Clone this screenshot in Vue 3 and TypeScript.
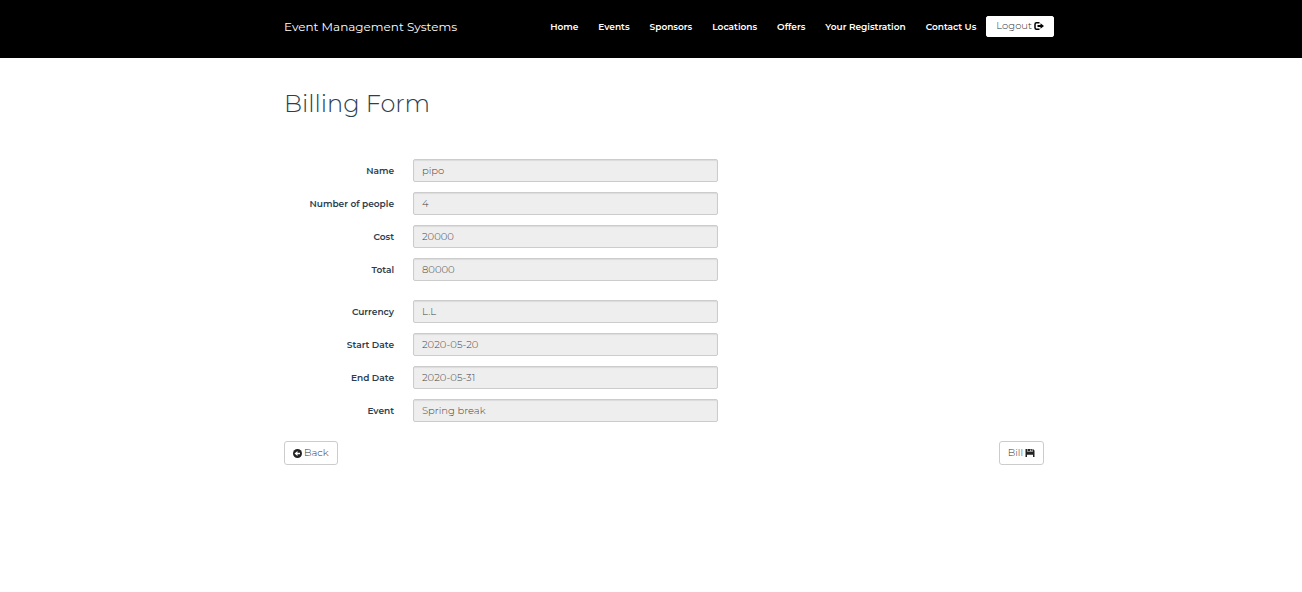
<script setup lang="ts">
interface Field {
  id: string
  label: string
  value: string
}

const links: string[] = ['Home', 'Events', 'Sponsors', 'Locations', 'Offers', 'Your Registration', 'Contact Us']

const groups: Field[][] = [
  [
    { id: 'name', label: 'Name', value: 'pipo' },
    { id: 'people', label: 'Number of people', value: '4' },
    { id: 'cost', label: 'Cost', value: '20000' },
    { id: 'total', label: 'Total', value: '80000' },
  ],
  [
    { id: 'currency', label: 'Currency', value: 'L.L' },
    { id: 'start', label: 'Start Date', value: '2020-05-20' },
    { id: 'end', label: 'End Date', value: '2020-05-31' },
    { id: 'event', label: 'Event', value: 'Spring break' },
  ],
]
</script>

<template>
  <div class="page">
    <header class="topbar">
      <div class="container bar">
        <a class="brand" href="#">Event Management Systems</a>
        <nav class="nav">
          <a v-for="link in links" :key="link" class="nav-link" href="#">{{ link }}</a>
          <button type="button" class="btn logout">
            <span>Logout</span>
            <svg class="icon" viewBox="0 0 20 16" aria-hidden="true">
              <path d="M11 1.500H5Q2 1.500 2 4.500v7q0 3 3 3h6" fill="none" stroke="currentColor" stroke-width="3" />
              <path d="M7 6h6V2.500L20 8l-7 5.500V10H7z" fill="currentColor" />
            </svg>
          </button>
        </nav>
      </div>
    </header>

    <main class="container">
      <h1 class="title">Billing Form</h1>
      <form class="form" @submit.prevent>
        <div v-for="(group, index) in groups" :key="index" class="group">
          <div v-for="field in group" :key="field.id" class="row">
            <label class="label" :for="field.id">{{ field.label }}</label>
            <input :id="field.id" class="input" type="text" :value="field.value" disabled />
          </div>
        </div>
        <div class="actions">
          <button type="button" class="btn">
            <svg class="icon back" viewBox="0 0 18 18" aria-hidden="true">
              <circle cx="9" cy="9" r="9" fill="currentColor" />
              <path d="M3 9l6-5v3.300h5v3.400H9V14z" fill="#fff" />
            </svg>
            <span>Back</span>
          </button>
          <button type="submit" class="btn bill">
            <span>Bill</span>
            <svg class="icon" viewBox="0 0 18 16" aria-hidden="true">
              <path d="M0 0h4v6h10V0h1l3 3v13h-3v-5H3v5H0z" fill="currentColor" />
              <path d="M3 6h12v5H3z" fill="currentColor" />
              <path d="M5 0h8v5H5z" fill="currentColor" />
              <path d="M9.500 1h2v3h-2z" fill="#fff" />
            </svg>
          </button>
        </div>
      </form>
    </main>
  </div>
</template>

<style>
body {
  margin: 0;
  background: #fff;
}
</style>

<style scoped>
.page {
  font-family: Montserrat, Inter, "Open Sans", sans-serif;
  font-size: 10px;
  line-height: 14px;
  color: #2c3e50;
}

.container {
  box-sizing: border-box;
  max-width: 770px;
  margin-left: max(16px, calc(50% - 367px));
}

.topbar {
  background: #000;
  padding: 15px 0 21px;
}

.bar {
  display: flex;
  align-items: center;
  justify-content: space-between;
  min-height: 22px;
}

.brand {
  padding-top: 2px;
  color: #fff;
  font-size: 12px;
  font-weight: 400;
  text-decoration: none;
  white-space: nowrap;
}

.nav {
  display: flex;
  align-items: center;
}

.nav-link {
  padding: 2px 10px 0;
  color: #fff;
  font-size: 9px;
  font-weight: 600;
  text-decoration: none;
  white-space: nowrap;
}

.btn {
  display: inline-flex;
  align-items: center;
  gap: 2px;
  height: 24px;
  padding: 0 8px;
  border: 1px solid #ccc;
  border-radius: 3px;
  background: #fff;
  color: #333;
  font: inherit;
  font-weight: 300;
  cursor: pointer;
}

.logout {
  height: 21px;
  padding: 0 9px;
  border-color: #fff;
  border-radius: 2px;
}

.icon {
  width: 10px;
  height: 8px;
  color: #000;
}

.back {
  width: 9px;
  height: 9px;
  color: #222;
}

.bill .icon {
  color: #222;
}

.title {
  margin: 0;
  padding-top: 30px;
  font-size: 24px;
  line-height: 32px;
  font-weight: 300;
}

.form {
  padding: 39px 10px 0 0;
}

.group {
  display: grid;
  gap: 10px;
  margin-bottom: 19px;
}

.row {
  display: grid;
  grid-template-columns: 110px minmax(0, 305px);
  column-gap: 19px;
  align-items: center;
}

.label {
  text-align: right;
  font-size: 9px;
  font-weight: 600;
  color: #2c3e50;
}

.input {
  box-sizing: border-box;
  width: 100%;
  height: 23px;
  padding: 0 8px;
  border: 1px solid #ccc;
  border-radius: 2px;
  background: #eee;
  box-shadow: inset 0 1px 1px rgba(0, 0, 0, 0.08);
  color: #444;
  font: inherit;
  font-weight: 300;
}

.actions {
  display: flex;
  justify-content: space-between;
}
</style>
